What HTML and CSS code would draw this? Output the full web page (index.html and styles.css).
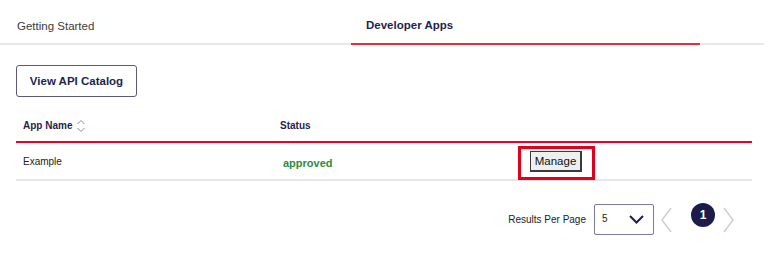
FILE: index.html
```html
<!DOCTYPE html>
<html lang="en">
<head>
    <meta charset="UTF-8">
    <meta name="viewport" content="width=device-width, initial-scale=1.0">
    <title>Developer Apps</title>
    <link rel="stylesheet" href="styles.css">
</head>
<body>
    <nav class="tabs">
        <a class="tab" href="#">Getting Started</a>
        <a class="tab active" href="#">Developer Apps</a>
    </nav>

    <main class="content">
        <button class="catalog-btn">View API Catalog</button>

        <table class="apps">
            <thead>
                <tr>
                    <th class="col-name">
                        App Name
                        <svg class="sort" width="10" height="16" viewBox="0 0 10 16">
                            <polyline points="1.5,6 5,2.5 8.5,6" fill="none" stroke="#8a8a9a" stroke-width="1"/>
                            <polyline points="1.5,10 5,13.5 8.5,10" fill="none" stroke="#8a8a9a" stroke-width="1"/>
                        </svg>
                    </th>
                    <th class="col-status">Status</th>
                    <th class="col-action"></th>
                </tr>
            </thead>
            <tbody>
                <tr>
                    <td>Example</td>
                    <td class="status approved">approved</td>
                    <td class="action"><button class="manage-btn">Manage</button></td>
                </tr>
            </tbody>
        </table>

        <div class="pager">
            <span class="pager-label">Results Per Page</span>
            <div class="per-page">
                <span>5</span>
                <svg width="15" height="9" viewBox="0 0 15 9">
                    <polyline points="1,1 7.5,7.5 14,1" fill="none" stroke="#1f1f4e" stroke-width="2"/>
                </svg>
            </div>
            <svg class="arrow" width="11" height="26" viewBox="0 0 11 26">
                <polyline points="10,1 1,13 10,25" fill="none" stroke="#cfcfcf" stroke-width="1.5"/>
            </svg>
            <span class="page current">1</span>
            <svg class="arrow" width="11" height="26" viewBox="0 0 11 26">
                <polyline points="1,1 10,13 1,25" fill="none" stroke="#cfcfcf" stroke-width="1.5"/>
            </svg>
        </div>
    </main>
</body>
</html>
```

FILE: styles.css
```css
* {
    margin: 0;
    padding: 0;
    box-sizing: border-box;
    font-family: 'Liberation Sans', Arial, sans-serif;
}

body {
    background: #fff;
    color: #333;
}

.tabs {
    display: flex;
    width: 764px;
    border-bottom: 2px solid #e9e9e9;
}

.tab {
    display: flex;
    align-items: center;
    height: 43px;
    padding: 9px 0 0 17px;
    width: 351px;
    font-size: 11.5px;
    color: #3c3c3c;
    text-decoration: none;
}

.tab.active {
    width: 349px;
    padding-left: 15px;
    margin-bottom: -2px;
    height: 45px;
    padding-top: 7px;
    border-bottom: 2px solid #e0303f;
    color: #1f1f4e;
    font-weight: bold;
}

.content {
    padding: 20px 16px 0;
    width: 752px;
}

.catalog-btn {
    width: 121px;
    height: 32px;
    background: #fff;
    border: 1px solid #5a5a7e;
    border-radius: 3px;
    color: #1f1f4e;
    font-size: 11.5px;
    font-weight: bold;
}

.apps {
    width: 736px;
    margin-top: 13px;
    border-collapse: collapse;
}

.apps th {
    height: 32px;
    padding: 0 0 0 7px;
    text-align: left;
    font-size: 10px;
    font-weight: bold;
    color: #1f1f4e;
    border-bottom: 2px solid #e4002b;
    vertical-align: middle;
}

.col-name {
    width: 257px;
}

.col-status {
    width: 237px;
}

.sort {
    vertical-align: middle;
    margin-left: 1px;
}

.apps td {
    height: 38px;
    padding: 0 0 0 7px;
    font-size: 10px;
    color: #222;
    border-bottom: 2px solid #e6e6e6;
    vertical-align: middle;
}

.apps td.approved {
    padding-left: 10px;
    padding-top: 3px;
    font-size: 11px;
    font-weight: bold;
    color: #2f8a3c;
}

.apps td.action {
    padding-left: 20px;
}

.manage-btn {
    position: relative;
    width: 52px;
    height: 21px;
    background: #efefef;
    border: 1px solid #3a3a3a;
    border-right-width: 2px;
    border-bottom-width: 2px;
    font-size: 11.5px;
    color: #111;
}

.manage-btn::after {
    content: '';
    position: absolute;
    top: -6px;
    left: -13px;
    right: -15px;
    bottom: -10px;
    border: 3px solid #e0001b;
}

.pager {
    display: flex;
    align-items: center;
    justify-content: flex-end;
    margin-top: 22px;
    margin-right: 2px;
}

.pager-label {
    font-size: 10px;
    color: #222;
    margin-right: 8px;
}

.per-page {
    display: flex;
    align-items: center;
    justify-content: space-between;
    width: 60px;
    height: 31px;
    padding: 0 9px 0 7px;
    border: 1px solid #7a7a9c;
    border-radius: 2px;
    font-size: 10px;
    color: #222;
    margin-right: 7px;
}

.per-page span {
    margin-bottom: 3px;
}

.page {
    display: flex;
    align-items: center;
    justify-content: center;
    width: 24px;
    height: 24px;
    border-radius: 50%;
    margin: 0 8px 9px 19px;
}

.page.current {
    background: #1c1c4c;
    color: #fff;
    font-size: 12px;
    font-weight: bold;
}
```
